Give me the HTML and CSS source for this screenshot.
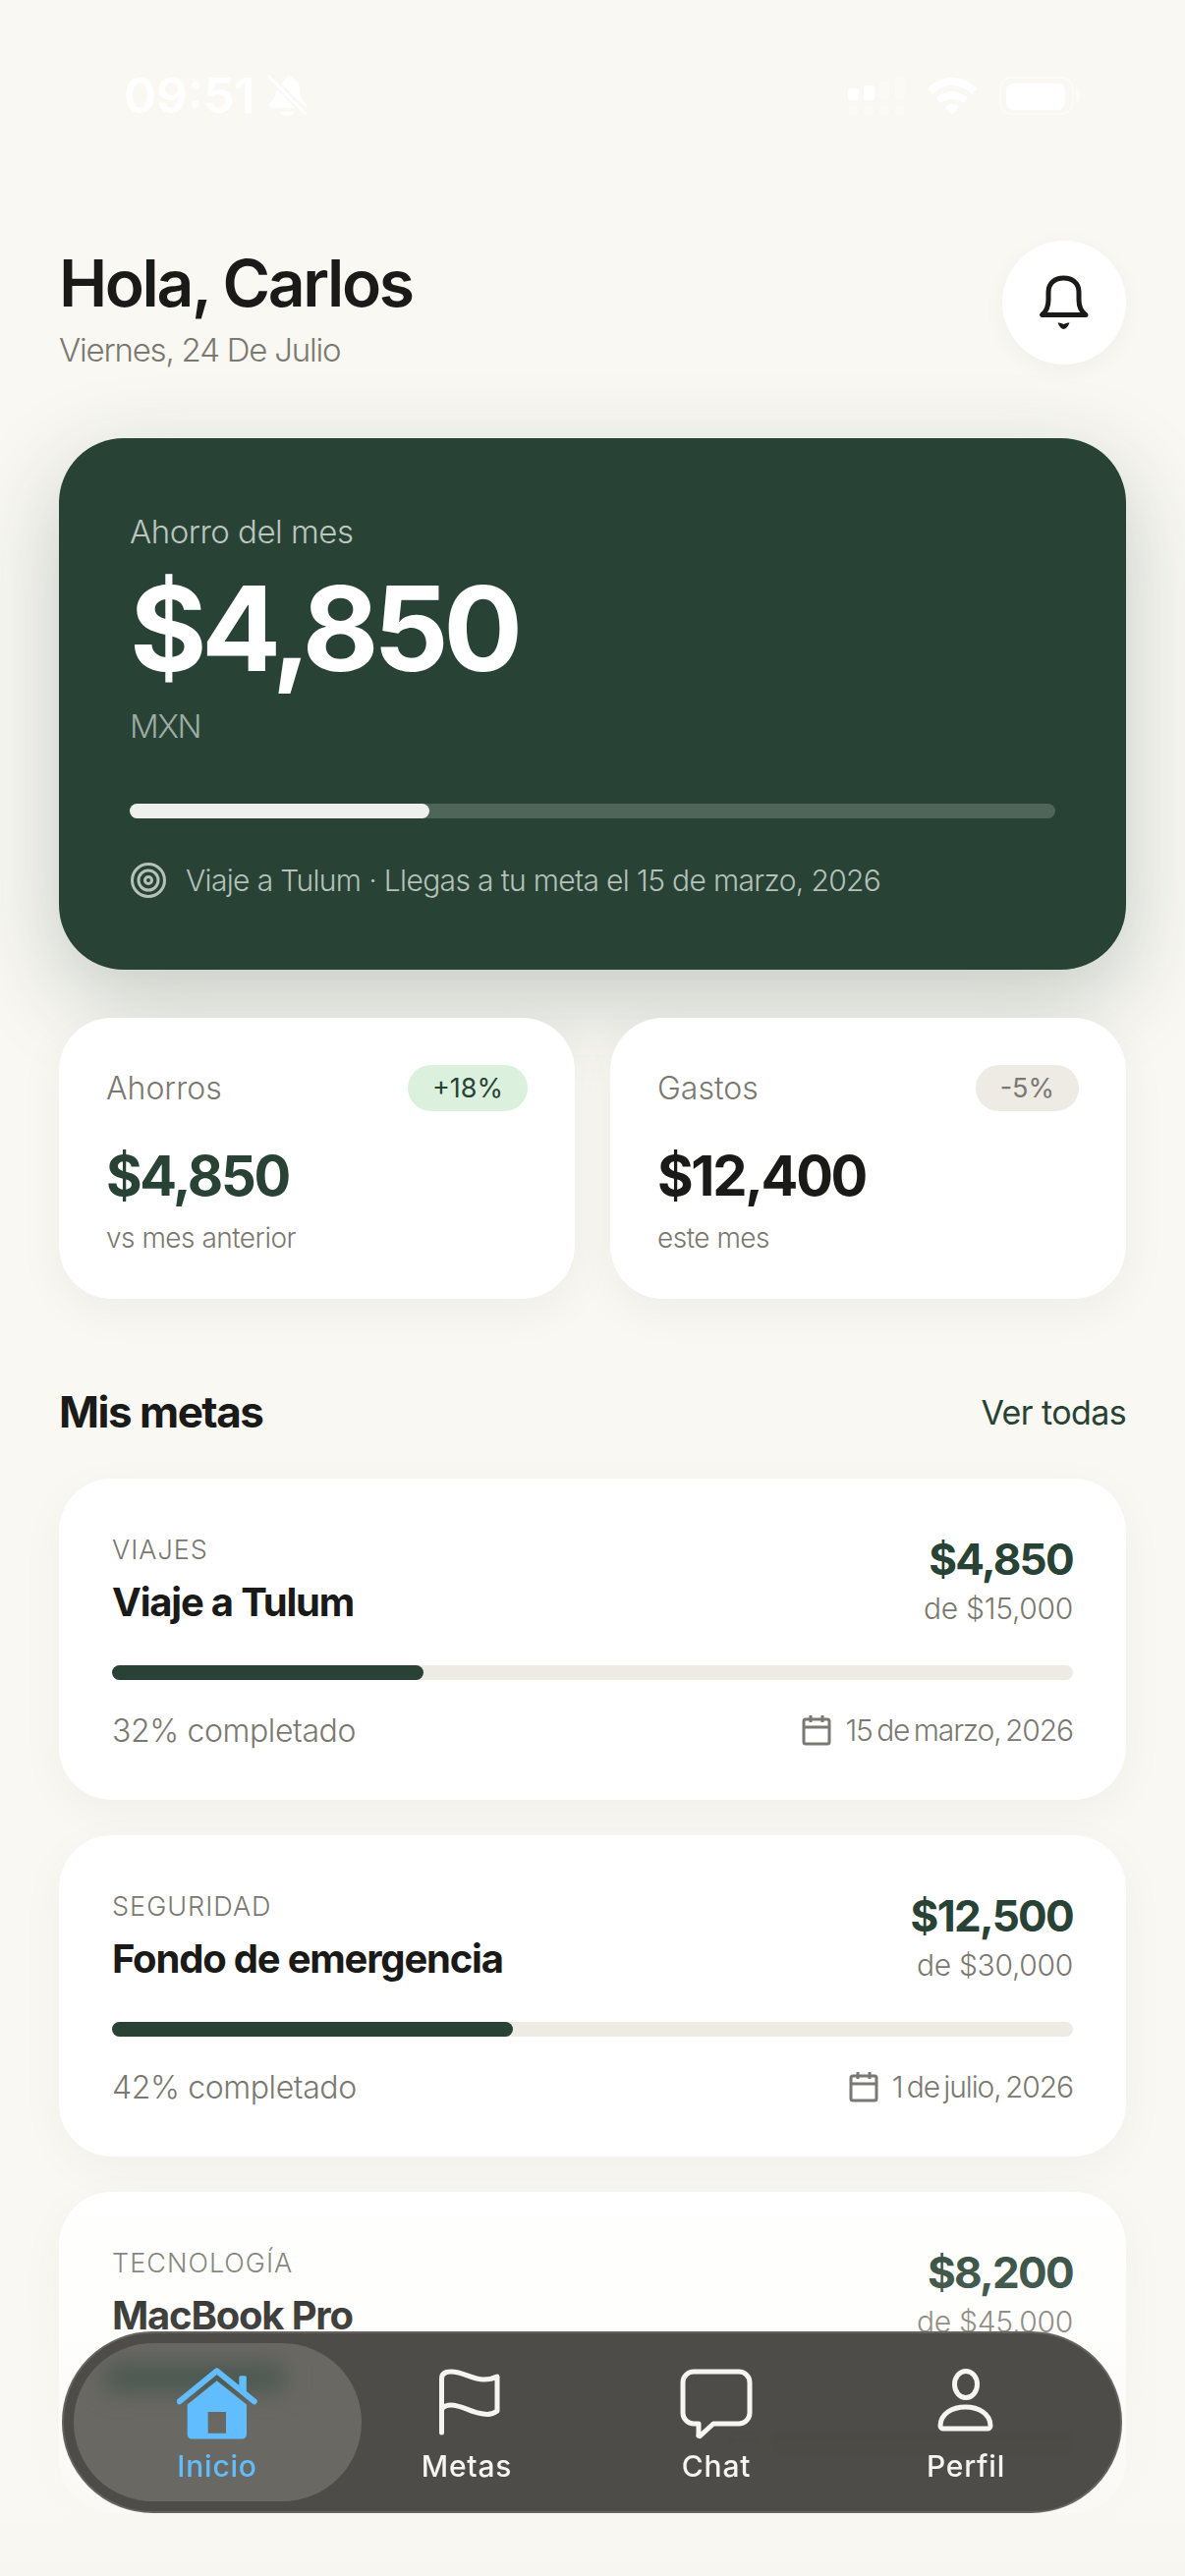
FILE: index.html
```html
<!DOCTYPE html>
<html lang="es">
<head>
    <meta charset="UTF-8">
    <meta name="viewport" content="width=device-width, initial-scale=1.0">
    <title>Inicio</title>
    <link rel="stylesheet" href="styles.css">
</head>
<body>
    <div class="screen">
        <!-- Status bar -->
        <div class="status-bar">
            <div class="status-left">
                <span class="status-time">09:51</span>
                <svg class="status-mute" width="42" height="42" viewBox="0 0 42 42">
                    <path d="M21 1c3 0 5 2 6 4 5 2 6 7 6 12 0 6 3 9 6 12 2 2 1 5-2 5H5c-3 0-4-3-2-5 3-3 5-6 6-12z" fill="#fff"/>
                    <path d="M14 38h13c-1 3-4 4-6 4s-6-1-7-4z" fill="#fff"/>
                    <path d="M2 2l38 38" stroke="#f9f8f3" stroke-width="8"/>
                    <path d="M1 1l39 40" stroke="#fff" stroke-width="3"/>
                </svg>
            </div>
            <div class="status-right">
                <svg width="58" height="42" viewBox="0 0 58 42">
                    <rect x="0" y="12" width="11" height="12" rx="3" fill="#fff"/>
                    <rect x="16" y="9" width="11" height="15" rx="3" fill="#fff"/>
                    <rect x="32" y="5" width="10" height="19" rx="3" fill="#fff" opacity=".3"/>
                    <rect x="48" y="0" width="10" height="24" rx="3" fill="#fff" opacity=".3"/>
                    <rect x="0" y="30" width="10" height="10" rx="3" fill="#fff" opacity=".3"/>
                    <rect x="16" y="30" width="10" height="10" rx="3" fill="#fff" opacity=".3"/>
                    <rect x="32" y="30" width="10" height="10" rx="3" fill="#fff" opacity=".3"/>
                    <rect x="48" y="30" width="10" height="10" rx="3" fill="#fff" opacity=".3"/>
                </svg>
                <svg width="52" height="40" viewBox="0 0 52 40">
                    <path d="M1 12C8 5 16 1 26 1s18 4 25 11l-5 6C40 12 34 9 26 9S12 12 6 18z" fill="#fff"/>
                    <path d="M10 22c4-4 10-7 16-7s12 3 16 7l-5 5c-3-3-7-4-11-4s-8 1-11 4z" fill="#fff"/>
                    <path d="M19 31c2-2 4-3 7-3s5 1 7 3l-7 8z" fill="#fff"/>
                </svg>
                <div class="battery"><div class="battery-fill"></div></div>
            </div>
        </div>

        <div class="content">
            <!-- Header -->
            <div class="header">
                <div class="header-text">
                    <h1 class="greeting">Hola, Carlos</h1>
                    <p class="date">Viernes, 24 De Julio</p>
                </div>
                <button class="bell-btn">
                    <svg width="54" height="58" viewBox="0 0 54 58">
                        <path d="M4.500 41.500H49C44 38 42 32 42 26V18C42 9 35 4 26.500 4S11 9 11 18V26C11 32 9 38 4.500 41.500Z" fill="none" stroke="#1a1a18" stroke-width="5" stroke-linejoin="round"/>
                        <path d="M20.500 49.500Q23.500 49 26.500 51Q29.500 49 32.500 49.500Q30 56 26.500 56Q23 56 20.500 49.500Z" fill="#1a1a18"/>
                    </svg>
                </button>
            </div>

            <!-- Hero card -->
            <div class="hero">
                <p class="hero-label">Ahorro del mes</p>
                <p class="hero-amount">$4,850</p>
                <p class="hero-currency">MXN</p>
                <div class="hero-bar"><div class="hero-fill"></div></div>
                <div class="hero-goal">
                    <svg width="38" height="38" viewBox="0 0 38 38" fill="none" stroke="#b5c1b9" stroke-width="3">
                        <circle cx="19" cy="19" r="16.500"/>
                        <circle cx="19" cy="19" r="10"/>
                        <circle cx="19" cy="19" r="3.500"/>
                    </svg>
                    <span>Viaje a Tulum · Llegas a tu meta el 15 de marzo, 2026</span>
                </div>
            </div>

            <!-- Stats -->
            <div class="stats">
                <div class="stat-card">
                    <div class="stat-top">
                        <span class="stat-label">Ahorros</span>
                        <span class="badge badge-up">+18%</span>
                    </div>
                    <p class="stat-value green">$4,850</p>
                    <p class="stat-sub">vs mes anterior</p>
                </div>
                <div class="stat-card">
                    <div class="stat-top">
                        <span class="stat-label">Gastos</span>
                        <span class="badge badge-down">-5%</span>
                    </div>
                    <p class="stat-value">$12,400</p>
                    <p class="stat-sub">este mes</p>
                </div>
            </div>

            <!-- Goals -->
            <div class="section-head">
                <h2>Mis metas</h2>
                <span class="see-all">Ver todas</span>
            </div>

            <div class="goals">
                <div class="goal-card">
                    <div class="goal-top">
                        <div>
                            <p class="goal-cat">VIAJES</p>
                            <p class="goal-name">Viaje a Tulum</p>
                        </div>
                        <div class="goal-money">
                            <p class="goal-saved">$4,850</p>
                            <p class="goal-total">de $15,000</p>
                        </div>
                    </div>
                    <div class="goal-bar"><div class="goal-fill" style="width: 32.4%"></div></div>
                    <div class="goal-foot">
                        <span>32% completado</span>
                        <span class="goal-date">
                            <svg width="30" height="32" viewBox="0 0 30 32" fill="none" stroke="#7a7870" stroke-width="3" stroke-linejoin="round"><rect x="2" y="5" width="26" height="25" rx="2"/><path d="M2 13H28M9 1V8M21 1V8"/></svg>
                            15 de marzo, 2026
                        </span>
                    </div>
                </div>

                <div class="goal-card">
                    <div class="goal-top">
                        <div>
                            <p class="goal-cat">SEGURIDAD</p>
                            <p class="goal-name">Fondo de emergencia</p>
                        </div>
                        <div class="goal-money">
                            <p class="goal-saved">$12,500</p>
                            <p class="goal-total">de $30,000</p>
                        </div>
                    </div>
                    <div class="goal-bar"><div class="goal-fill" style="width: 41.7%"></div></div>
                    <div class="goal-foot">
                        <span>42% completado</span>
                        <span class="goal-date">
                            <svg width="30" height="32" viewBox="0 0 30 32" fill="none" stroke="#7a7870" stroke-width="3" stroke-linejoin="round"><rect x="2" y="5" width="26" height="25" rx="2"/><path d="M2 13H28M9 1V8M21 1V8"/></svg>
                            1 de julio, 2026
                        </span>
                    </div>
                </div>

                <div class="goal-card">
                    <div class="goal-top">
                        <div>
                            <p class="goal-cat">TECNOLOGÍA</p>
                            <p class="goal-name">MacBook Pro</p>
                        </div>
                        <div class="goal-money">
                            <p class="goal-saved">$8,200</p>
                            <p class="goal-total">de $45,000</p>
                        </div>
                    </div>
                    <div class="goal-bar"><div class="goal-fill" style="width: 18%"></div></div>
                    <!-- this row sits behind the tab bar, only a shadow of it shows through -->
                    <div class="goal-foot goal-foot-hidden">
                        <span class="goal-date">
                            <svg width="30" height="32" viewBox="0 0 30 32" fill="none" stroke="#7a7870" stroke-width="3" stroke-linejoin="round"><rect x="2" y="5" width="26" height="25" rx="2"/><path d="M2 13H28M9 1V8M21 1V8"/></svg>
                            <span class="ghost-line"></span>
                        </span>
                    </div>
                </div>
            </div>
        </div>

        <div class="bottom-fade"></div>

        <!-- Tab bar -->
        <nav class="tabbar">
            <div class="tab-pill"><div class="tab-smudge"></div></div>
            <div class="tab active">
                <svg class="tab-icon" width="82" height="76" viewBox="0 0 82 76">
                    <path d="M2.700 34.300L40.700 3.300L78.700 34.300" fill="none" stroke="#62bdff" stroke-width="6" stroke-linecap="round" stroke-linejoin="round"/>
                    <rect x="63.300" y="8.300" width="7.500" height="16" rx="1.500" fill="#62bdff"/>
                    <path fill-rule="evenodd" d="M40.700 13.300L71 37.500V68a4.500 4.500 0 0 1-4.500 4.500H15.200a4.500 4.500 0 0 1-4.500-4.500V37.500ZM31.700 45V66.700H50V45Z" fill="#62bdff"/>
                </svg>
                <span>Inicio</span>
            </div>
            <div class="tab">
                <svg class="tab-icon tab-flag" width="68" height="76" viewBox="0 0 68 76" fill="none" stroke="#f6f5f1" stroke-width="5" stroke-linecap="round" stroke-linejoin="round">
                    <path d="M5.500 66V11C5.500 6 9 4 15 4C28 4 36 12 48 12C53 12 58 11 62 9V44C58 47 53 48 48 47C36 46 26 38 15 38C11 38 8 39 5.500 42"/>
                </svg>
                <span>Metas</span>
            </div>
            <div class="tab">
                <svg class="tab-icon" width="76" height="76" viewBox="0 0 76 76" fill="none" stroke="#f6f5f1" stroke-width="5" stroke-linejoin="round">
                    <path d="M15 4H61A11 11 0 0 1 72 15V46A11 11 0 0 1 61 57H35L22 69A1 1 0 0 1 20 68V57H15A11 11 0 0 1 4 46V15A11 11 0 0 1 15 4Z"/>
                </svg>
                <span>Chat</span>
            </div>
            <div class="tab">
                <svg class="tab-icon" width="60" height="76" viewBox="0 0 60 76" fill="none" stroke="#f6f5f1" stroke-width="5">
                    <ellipse cx="30" cy="17" rx="11.500" ry="13.500"/>
                    <path d="M7 62H52A3 3 0 0 0 55 59C55 47 43 40 29.500 40C16 40 4 47 4 59A3 3 0 0 0 7 62Z"/>
                </svg>
                <span>Perfil</span>
            </div>
        </nav>
    </div>
</body>
</html>
```

FILE: styles.css
```css
* {
    box-sizing: border-box;
}
body {
    margin: 0;
    background: #f9f8f3;
    font-family: 'Inter', 'Open Sans', sans-serif;
    color: #1a1a18;
}
p, h1, h2 {
    margin: 0;
}
.screen {
    position: relative;
    width: 1206px;
    height: 2622px;
    overflow: hidden;
    background: #f9f8f3;
}
.status-bar {
    display: flex;
    justify-content: space-between;
    align-items: flex-start;
    height: 245px;
    padding: 76px 113px 0 126px;
}
.status-left {
    display: flex;
    align-items: center;
    gap: 12px;
}
.status-time {
    font-size: 50px;
    line-height: 42px;
    font-weight: 600;
    color: #fff;
}
.status-right {
    display: flex;
    align-items: flex-start;
    gap: 22px;
    padding-top: 2px;
}
.battery {
    position: relative;
    width: 76px;
    height: 39px;
    padding: 5px;
    border: 2px solid rgba(255, 255, 255, 0.45);
    border-radius: 13px;
}
.battery::after {
    content: "";
    position: absolute;
    right: -8px;
    top: 10px;
    width: 4px;
    height: 14px;
    background: rgba(255, 255, 255, 0.5);
    border-radius: 0 4px 4px 0;
}
.battery-fill {
    width: 60px;
    height: 27px;
    background: #fff;
    border-radius: 8px;
}
.content {
    padding: 0 60px;
}
.header {
    display: flex;
    justify-content: space-between;
    align-items: flex-start;
    height: 126px;
    margin-bottom: 75px;
}
.header-text {
    padding-top: 5px;
}
.greeting {
    font-size: 66px;
    line-height: 76px;
    font-weight: 600;
    letter-spacing: -2.400px;
}
.date {
    margin-top: 10px;
    font-size: 33px;
    line-height: 40px;
    font-weight: 300;
    letter-spacing: -1.200px;
    color: #7a7870;
}
.bell-btn {
    display: flex;
    justify-content: center;
    align-items: center;
    width: 126px;
    height: 126px;
    padding: 0;
    border: none;
    border-radius: 50%;
    background: #fff;
    box-shadow: 0 6px 24px rgba(0, 0, 0, 0.04);
}
.hero {
    height: 541px;
    padding: 75px 72px 0;
    background: #284235;
    border-radius: 66px;
    box-shadow: 0 30px 90px rgba(40, 66, 53, 0.25);
}
.hero-label {
    font-size: 33px;
    line-height: 40px;
    font-weight: 300;
    letter-spacing: -0.500px;
    color: #bcc6bf;
}
.hero-amount {
    margin-top: 19px;
    font-size: 120px;
    line-height: 120px;
    font-weight: 700;
    letter-spacing: -5.600px;
    color: #fff;
}
.hero-currency {
    margin-top: 19px;
    font-size: 33px;
    line-height: 40px;
    font-weight: 300;
    letter-spacing: -1.500px;
    color: #9dada3;
}
.hero-bar {
    height: 15px;
    margin-top: 59px;
    background: #4f6559;
    border-radius: 8px;
}
.hero-fill {
    width: 32.4%;
    height: 100%;
    background: #eef0ee;
    border-radius: 8px;
}
.hero-goal {
    display: flex;
    align-items: center;
    gap: 19px;
    height: 40px;
    margin-top: 43px;
    font-size: 30px;
    font-weight: 300;
    letter-spacing: -0.650px;
    color: #b5c1b9;
}
.stats {
    display: grid;
    grid-template-columns: 1fr 1fr;
    gap: 36px;
    margin-top: 49px;
}
.stat-card {
    height: 286px;
    padding: 48px;
    background: #fff;
    border-radius: 54px;
    box-shadow: 0 12px 48px rgba(0, 0, 0, 0.05);
}
.stat-top {
    display: flex;
    justify-content: space-between;
    align-items: center;
}
.stat-label {
    font-size: 32px;
    font-weight: 300;
    color: #7a7870;
}
.badge {
    height: 47px;
    padding: 0 25px;
    font-size: 27px;
    line-height: 47px;
    border-radius: 24px;
}
.badge-up {
    background: #dcf1dd;
    color: #284235;
}
.badge-down {
    background: #eeebe5;
    color: #7a7870;
}
.stat-value {
    margin-top: 33px;
    font-size: 56px;
    line-height: 66px;
    font-weight: 700;
    letter-spacing: -2.300px;
}
.green {
    color: #284235;
}
.stat-sub {
    margin-top: 10px;
    font-size: 28px;
    line-height: 40px;
    font-weight: 300;
    letter-spacing: -0.500px;
    color: #7a7870;
}
.section-head {
    display: flex;
    justify-content: space-between;
    align-items: center;
    height: 56px;
    margin: 87px 0 40px;
}
.section-head h2 {
    font-size: 44px;
    font-weight: 700;
    letter-spacing: -1.500px;
}
.see-all {
    font-size: 34px;
    font-weight: 400;
    letter-spacing: -0.600px;
    color: #284235;
}
.goals {
    display: flex;
    flex-direction: column;
    gap: 36px;
}
.goal-card {
    height: 327px;
    padding: 56px 54px 0;
    background: #fff;
    border-radius: 54px;
    box-shadow: 0 12px 48px rgba(0, 0, 0, 0.04);
}
.goal-top {
    display: flex;
    justify-content: space-between;
    height: 96px;
}
.goal-cat {
    font-size: 27px;
    line-height: 34px;
    font-weight: 300;
    letter-spacing: 1px;
    color: #7a7870;
}
.goal-name {
    margin-top: 12px;
    font-size: 40px;
    line-height: 48px;
    font-weight: 700;
    letter-spacing: -1.200px;
}
.goal-money {
    text-align: right;
}
.goal-saved {
    font-size: 44px;
    line-height: 52px;
    font-weight: 700;
    letter-spacing: -1.700px;
    color: #284235;
}
.goal-total {
    margin-top: 4px;
    font-size: 30px;
    line-height: 40px;
    font-weight: 300;
    letter-spacing: -0.300px;
    color: #7a7870;
}
.goal-bar {
    height: 15px;
    margin-top: 38px;
    background: #eeebe5;
    border-radius: 8px;
}
.goal-fill {
    height: 100%;
    background: #284235;
    border-radius: 8px;
}
.goal-foot {
    display: flex;
    justify-content: space-between;
    align-items: center;
    height: 40px;
    margin-top: 31px;
    font-size: 32px;
    font-weight: 300;
    letter-spacing: -0.400px;
    color: #7a7870;
}
.goal-foot-hidden {
    justify-content: flex-end;
}
.goal-date {
    display: flex;
    align-items: center;
    gap: 14px;
    font-size: 30px;
    letter-spacing: -1.100px;
    word-spacing: -3px;
}
.ghost-line {
    width: 306px;
    height: 24px;
    background: #7a7870;
    border-radius: 4px;
}
.bottom-fade {
    position: absolute;
    left: 0;
    right: 0;
    bottom: 0;
    height: 420px;
    background: linear-gradient(to bottom, rgba(249, 248, 243, 0), rgba(249, 248, 243, 0.18) 40%, rgba(249, 248, 243, 0.9) 85%, #f7f6f1);
}
.tabbar {
    position: absolute;
    left: 63px;
    top: 2373px;
    display: grid;
    grid-template-columns: repeat(4, 254px);
    width: 1079px;
    height: 185px;
    padding: 35px 0 0 29px;
    background: rgba(72, 70, 66, 0.97);
    border: 2px solid #66645f;
    border-radius: 93px;
    backdrop-filter: blur(2px);
}
.tab-pill {
    position: absolute;
    left: 10px;
    top: 10px;
    width: 293px;
    height: 161px;
    background: #6a6863;
    border-radius: 81px;
    overflow: hidden;
}
.tab-smudge {
    position: absolute;
    left: 32px;
    top: 22px;
    width: 182px;
    height: 26px;
    background: #46574d;
    filter: blur(12px);
}
.tab {
    position: relative;
    display: flex;
    flex-direction: column;
    align-items: center;
    gap: 6px;
    font-size: 30px;
    line-height: 36px;
    font-weight: 500;
    letter-spacing: 0.800px;
    color: #f6f5f1;
}
.tab.active {
    color: #62bdff;
}
.tab-icon {
    display: block;
}
.tab-flag {
    margin-left: 6px;
}
```
